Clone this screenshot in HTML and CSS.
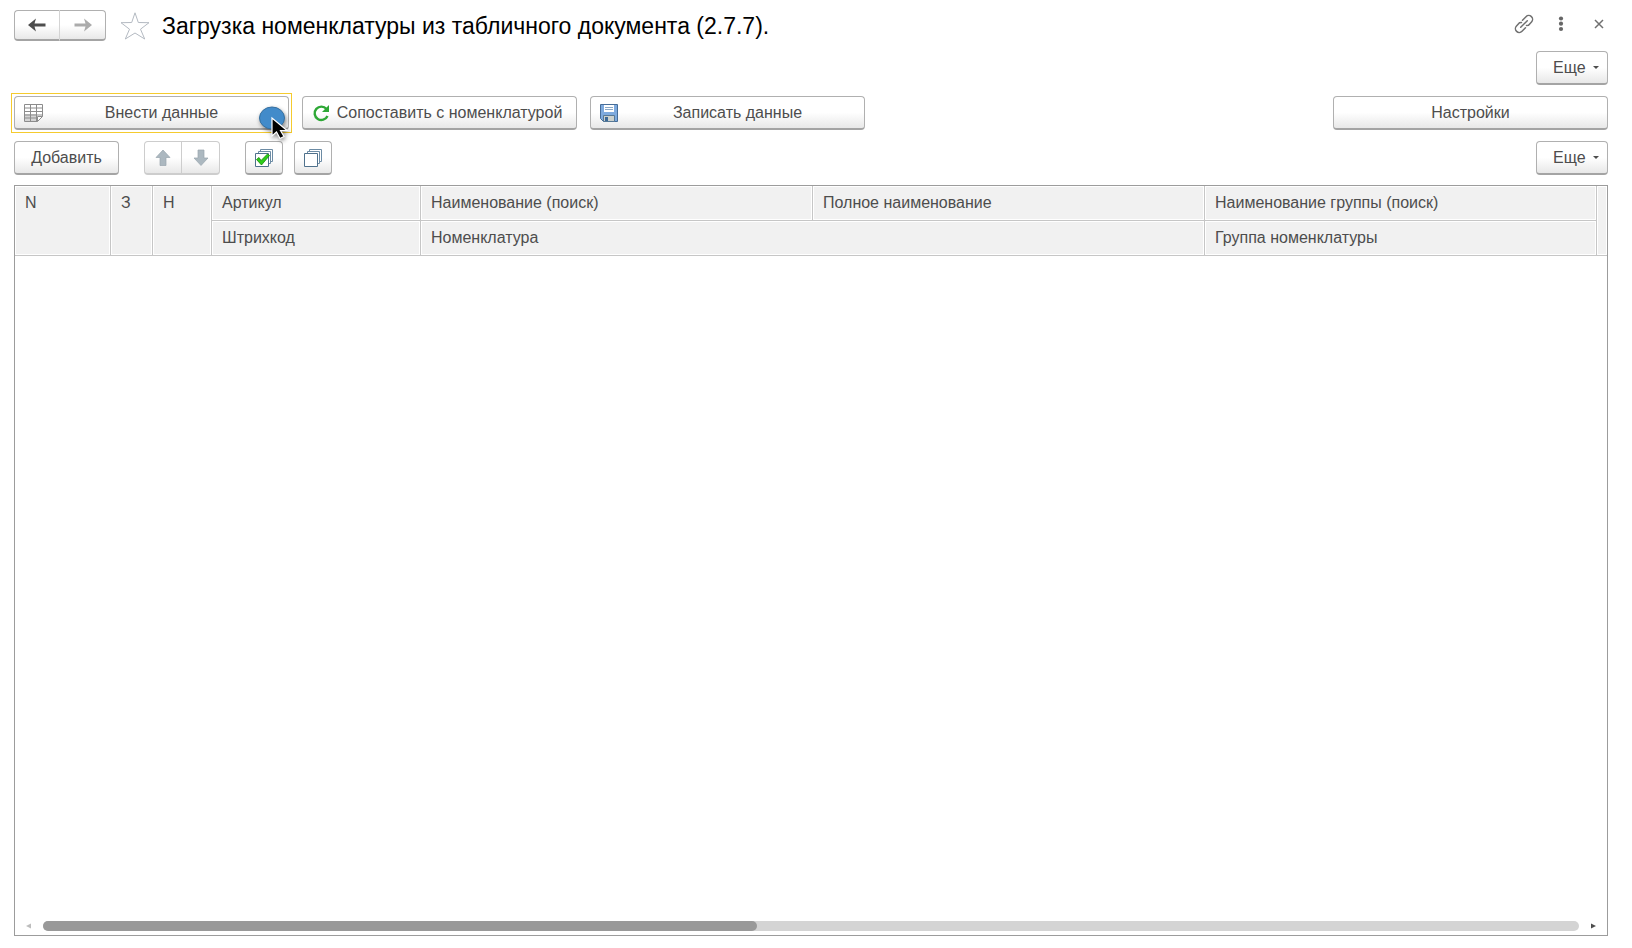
FILE: index.html
```html
<!DOCTYPE html>
<html lang="ru">
<head>
<meta charset="utf-8">
<title>Загрузка номенклатуры из табличного документа</title>
<link rel="stylesheet" href="styles.css">
</head>
<body>
<main class="form">
  <header class="titlebar">
    <div class="group nav">
      <button class="btn" type="button" aria-label="Назад"><svg width="18" height="14" viewBox="0 0 18 14"><path d="M0 7 8 0.5 6.500 5.500H17.500V8.500H6.500L8 13.500Z" fill="#4d4d4d"/></svg></button>
      <button class="btn" type="button" aria-label="Вперед"><svg width="18" height="14" viewBox="0 0 18 14"><path d="M18 7 10 0.5 11.500 5.500H0.500V8.500H11.500L10 13.500Z" fill="#ababab"/></svg></button>
    </div>
    <button class="plain star" type="button" aria-label="В избранное"><svg width="30" height="28" viewBox="0 0 30 28"><path d="M15 .8 18.300 10.500 29 10.700 20.500 17.200 24.700 27 15 21 5.300 27 9.500 17.200 1 10.700 11.700 10.500Z" fill="#fff" stroke="#b4bac2" stroke-width="1"/></svg></button>
    <h1 class="title">Загрузка номенклатуры из табличного документа (2.7.7).</h1>
    <div class="window-tools">
      <button class="plain" type="button" aria-label="Получить ссылку"><svg width="20" height="20" viewBox="0 0 20 20" fill="none" stroke="#707070" stroke-width="1.500" stroke-linecap="round"><path d="M6.700 13.300 13.300 6.700M8.500 6.200 12 2.700A3.800 3.800 0 0 1 17.500 8L14.500 11.200 12.500 11.500M11.500 13.800 8 17.300A3.800 3.800 0 0 1 2.500 12L5.500 8.800 7.500 8.500"/></svg></button>
      <button class="plain dots" type="button" aria-label="Меню"><svg width="6" height="16" viewBox="0 0 6 16" fill="#666"><circle cx="3" cy="2.500" r="2.100"/><circle cx="3" cy="7.700" r="2.100"/><circle cx="3" cy="13" r="2.100"/></svg></button>
      <button class="plain" type="button" aria-label="Закрыть"><svg width="10" height="10" viewBox="0 0 10 10"><path d="M1 1 9 9M9 1 1 9" stroke="#707070" stroke-width="1.500"/></svg></button>
    </div>
  </header>

  <div class="bar bar-end">
    <button class="btn more" type="button">Еще <span class="caret"></span></button>
  </div>

  <div class="bar commands">
    <button class="btn wide focused" type="button">
      <svg class="icon" width="20" height="20" viewBox="0 0 20 20"><path d="M.5 1.500H18.500V13.500L13.500 18.500H.5Z" fill="#fff"/><path d="M1 11H12V18H1Z" fill="#d4d4d4"/><path d="M.5 1.500H18.500V13.500L13.500 18.500H.5ZM.5 5H18.500M.5 8.500H18.500M.5 12H18.500M.5 15H13.500M6.500 1.500V18.500M12.500 1.500V18.500M13.500 18.500V13.500H18.500" fill="none" stroke="#8c8c8c"/></svg>
      <span class="label">Внести данные</span>
      <svg class="pointer" width="46" height="46" viewBox="0 0 46 46"><ellipse cx="15" cy="17" rx="12.500" ry="11" fill="#428bca" stroke="#356f9f"/><path d="M15 17V35L19.500 31 23 37.500 27 35.500 23.500 29.500H30Z" fill="#000" stroke="#fff" stroke-width="1.200"/></svg>
    </button>
    <button class="btn wide" type="button">
      <svg class="icon" width="20" height="20" viewBox="0 0 20 20"><path d="M15.500 13A6.700 6.700 0 1 1 14.500 6" fill="none" stroke="#2ea836" stroke-width="2.400"/><path d="M17 2V9H10Z" fill="#2ea836"/></svg>
      <span class="label">Сопоставить с номенклатурой</span>
    </button>
    <button class="btn wide" type="button">
      <svg class="icon" width="20" height="20" viewBox="0 0 20 20"><path d="M.5 1.500H17.500V18.500H3.500L.5 15.500Z" fill="#7eaade" stroke="#466d98"/><path d="M4 2H14V9H4Z" fill="#fff"/><path d="M5 4.500H13M5 6.500H13" stroke="#8ba9c7"/><path d="M3.500 12.500H14.500V18.500H3.500Z" fill="#cbd0cd" stroke="#567896"/><path d="M5 14H8V18H5Z" fill="#3c6996"/></svg>
      <span class="label">Записать данные</span>
    </button>
    <button class="btn wide settings" type="button"><span class="label">Настройки</span></button>
  </div>

  <div class="bar table-tools">
    <button class="btn add" type="button">Добавить</button>
    <div class="group move">
      <button class="btn" type="button" disabled aria-label="Вверх"><svg width="16" height="18" viewBox="0 0 16 18"><path d="M8 1 15 8.500H11V16.500H5V8.500H1Z" fill="#acb8c0" stroke="#98a5ae" stroke-width=".7"/></svg></button>
      <button class="btn" type="button" disabled aria-label="Вниз"><svg width="16" height="18" viewBox="0 0 16 18"><path d="M8 16.500 15 9H11V1H5V9H1Z" fill="#acb8c0" stroke="#98a5ae" stroke-width=".7"/></svg></button>
    </div>
    <div class="marks">
      <button class="btn square" type="button" aria-label="Установить флажки"><svg width="18" height="18" viewBox="0 0 18 18"><g fill="#fff" stroke="#6c8ba4"><path d="M5.500 .5H17.500V12.500H5.500Z"/><path d="M3.500 2.500H15.500V14.500H3.500Z"/><path d="M.5 4.500H13.500V17.500H.5Z" stroke="#4f718c"/></g><path d="M1.500 10.500 4 8.500 6 11.500 12.500 5 14.500 6.500 6.500 16Z" fill="#2cce18" stroke="#14870a" stroke-width=".8"/></svg></button>
      <button class="btn square" type="button" aria-label="Снять флажки"><svg width="18" height="18" viewBox="0 0 18 18"><g fill="#fff" stroke="#6c8ba4"><path d="M5.500 .5H17.500V12.500H5.500Z"/><path d="M3.500 2.500H15.500V14.500H3.500Z"/><path d="M.5 4.500H13.500V17.500H.5Z" stroke="#4f718c"/></g></svg></button>
    </div>
    <button class="btn more" type="button">Еще <span class="caret"></span></button>
  </div>

  <section class="grid">
    <table class="items">
      <colgroup><col class="c-num"><col class="c-z"><col class="c-n"><col class="c-code"><col><col><col><col class="c-end"></colgroup>
      <thead>
        <tr><th rowspan="2">N</th><th rowspan="2">З</th><th rowspan="2">Н</th><th>Артикул</th><th>Наименование (поиск)</th><th>Полное наименование</th><th>Наименование группы (поиск)</th><th rowspan="2"></th></tr>
        <tr><th>Штрихкод</th><th colspan="2">Номенклатура</th><th>Группа номенклатуры</th></tr>
      </thead>
    </table>
    <div class="scroll">
      <svg width="6" height="6" viewBox="0 0 6 6"><path d="M0 3 5 .5V5.500Z" fill="#bdbdbd"/></svg>
      <div class="track"><div class="thumb"></div></div>
      <svg width="6" height="6" viewBox="0 0 6 6"><path d="M6 3 1 .5V5.500Z" fill="#4d4d4d"/></svg>
    </div>
  </section>
</main>
</body>
</html>
```
FILE: styles.css
```css
* { box-sizing: border-box; }

body {
  margin: 0;
  background: #fff;
  color: #4d4d4d;
  font: 16px/20px "Liberation Sans", Arial, sans-serif;
}

.form {
  display: flex;
  flex-direction: column;
  min-height: 100vh;
  padding: 10px 24px 12px 14px;
}

button { font: inherit; color: inherit; }

.btn {
  display: flex;
  align-items: center;
  justify-content: center;
  height: 34px;
  padding: 0 8px;
  border: 1px solid #b0b0b0;
  border-bottom: 2px solid #a4a4a4;
  border-radius: 4px;
  background: linear-gradient(#fff 50%, #e8e8e8);
}

.plain {
  display: flex;
  padding: 0;
  border: 0;
  background: none;
}

.group { display: flex; }
.group .btn:first-child { border-radius: 4px 0 0 4px; }
.group .btn:last-child { border-left: 0; border-radius: 0 4px 4px 0; }

.titlebar { display: flex; align-items: center; height: 31px; }
.nav .btn { width: 46px; height: 31px; }
.nav .btn:first-child { border-right-color: #d4d4d4; }
.star { margin: 0 12px 0 14px; }
.title {
  margin: 0;
  color: #000;
  font-size: 23px;
  font-weight: 400;
  line-height: 28px;
}
.window-tools {
  display: flex;
  align-items: center;
  margin-left: auto;
  padding: 0 4px 3px 0;
}
.dots { margin: 0 30px 0 24px; }

.bar { display: flex; align-items: center; }
.bar-end { margin-top: 10px; }
.commands { gap: 13px; margin-top: 11px; }
.table-tools { margin-top: 11px; }

.more { justify-content: space-between; width: 72px; margin-left: auto; padding: 0 8px 0 16px; }
.caret { border: 3px solid transparent; border-top-color: #4d4d4d; border-bottom: 0; }

.wide { position: relative; width: 275px; padding: 0 9px; }
.wide .label { flex: 1; }
.settings { margin-left: auto; }
.focused::after {
  content: "";
  position: absolute;
  inset: -4px -4px -5px;
  border: 1px solid #f5cb2e;
}
.pointer {
  position: absolute;
  top: 4px;
  left: 242px;
  z-index: 1;
  filter: drop-shadow(1px 2px 2px rgba(0, 0, 0, .45));
}

.add { width: 105px; }
.move { margin-left: 25px; }
.move .btn { width: 38px; border-color: #cdcdcd; }
.marks { display: flex; gap: 11px; margin-left: 25px; }
.square { width: 38px; }

.grid {
  display: flex;
  flex: 1;
  flex-direction: column;
  justify-content: space-between;
  margin-top: 10px;
  border: 1px solid #9c9c9c;
}

.items { width: 100%; border-collapse: separate; border-spacing: 0; table-layout: fixed; }
.items th {
  height: 35px;
  padding: 7px 10px;
  border: solid #c6c6c6;
  border-width: 0 1px 1px 0;
  background: #f1f1f1;
  box-shadow: inset 0 0 0 1px #fff;
  font-weight: 400;
  text-align: left;
  vertical-align: top;
}
.items th:last-child[rowspan] { border-right: 0; padding: 0; }
.c-num { width: 96px; }
.c-z { width: 42px; }
.c-n { width: 59px; }
.c-code { width: 209px; }
.c-end { width: 10px; }

.scroll { display: flex; align-items: center; gap: 11px; padding: 0 11px 4px; }
.track { flex: 1; height: 10px; border-radius: 5px; background: #d4d4d4; }
.thumb { width: 46.5%; height: 10px; border-radius: 5px; background: #999; }
```
